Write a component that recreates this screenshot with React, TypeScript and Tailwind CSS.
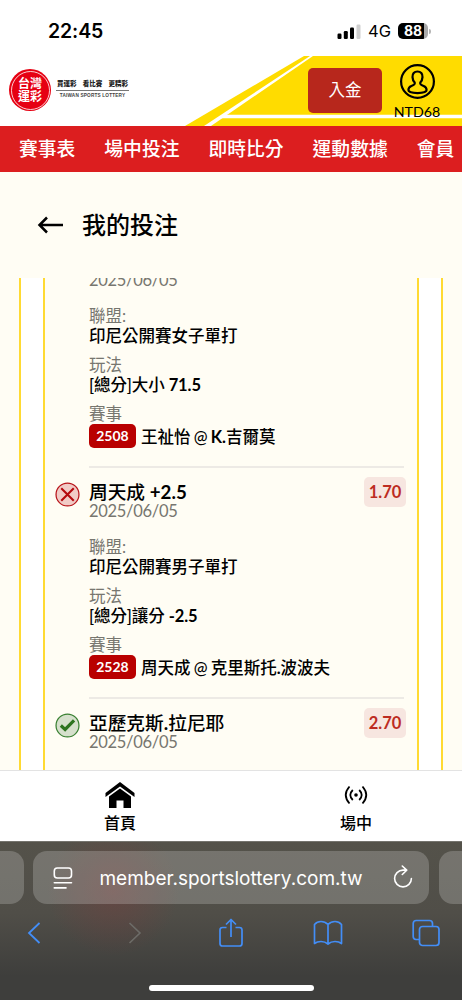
import React from 'react';

interface Bet {
  id: number;
  title: string;
  odds: string;
  status: 'win' | 'lose';
  date: string;
  league: string;
  play: string;
  code: string;
  match: string;
}

const BETS: Bet[] = [
  {
    id: 1,
    title: '',
    odds: '',
    status: 'win',
    date: '2025/06/05',
    league: '印尼公開賽女子單打',
    play: '[總分]大小 71.5',
    code: '2508',
    match: '王祉怡 @ K.吉爾莫',
  },
  {
    id: 2,
    title: '周天成 +2.5',
    odds: '1.70',
    status: 'lose',
    date: '2025/06/05',
    league: '印尼公開賽男子單打',
    play: '[總分]讓分 -2.5',
    code: '2528',
    match: '周天成 @ 克里斯托.波波夫',
  },
];

const NAV_ITEMS = ['賽事表', '場中投注', '即時比分', '運動數據', '會員'];

// Latin runs get a heavier weight so they sit evenly next to the Chinese text
function MixedText({ text }: { text: string }) {
  return (
    <span className="font-medium">
      {text.split(/([A-Z0-9+.-]+)/).map((part, i) =>
        i % 2 === 1 ? (
          <span key={i} className="font-bold">{part}</span>
        ) : (
          part
        )
      )}
    </span>
  );
}

function StatusBar() {
  return (
    <div className="flex h-14 shrink-0 items-start justify-between bg-white pl-12 pr-[31px] pt-[18px] font-['Inter','Liberation_Sans',sans-serif]">
      <span className="text-[19.5px] font-semibold leading-[26px] tracking-[-0.1px] text-black">22:45</span>
      <div className="flex h-[26px] items-center">
        <svg width="24" height="15" viewBox="0 0 24 15" className="mr-[7px]">
          <rect x="0.5" y="9.5" width="4" height="5.5" rx="1.2" />
          <rect x="6.8" y="7" width="4" height="8" rx="1.2" />
          <rect x="13" y="3.5" width="4" height="11.5" rx="1.2" />
          <rect x="19.5" y="0.5" width="4" height="14.5" rx="1.2" fill="#cfcfcf" />
        </svg>
        <span className="mr-[7px] text-[16.5px] leading-none text-black">4G</span>
        <div className="flex h-4 w-[30px] items-center justify-center rounded-[5px] bg-linear-to-r from-black from-88% to-[#aaa] to-88% text-[14px] font-bold leading-none text-white">
          88
        </div>
        <div className="ml-[1px] h-[5px] w-[2px] rounded-r bg-[#b5b5b5]" />
      </div>
    </div>
  );
}

function Logo() {
  return (
    <div className="flex items-center">
      <div className="flex size-[42px] items-center justify-center rounded-full bg-[#e60012] p-[1.5px]">
        <div className="grid size-full grid-cols-2 content-center justify-items-center gap-y-px rounded-full border border-white/80 px-[6.5px] text-[12px] font-bold leading-[12px] text-white">
          {['台', '灣', '運', '彩'].map((char) => (
            <span key={char}>{char}</span>
          ))}
        </div>
      </div>
      <div className="ml-[5px] mt-[-2px] w-[73px] text-center">
        <div className="flex justify-between border-b border-[#777] px-px pb-[2px] text-[6.5px] font-black leading-[9px] text-[#222]">
          <span>買運彩</span>
          <span>看比賽</span>
          <span>更精彩</span>
        </div>
        <div className="whitespace-nowrap pt-[1px] font-['Liberation_Sans',sans-serif] text-[4.7px] font-bold leading-[8px] tracking-[0.18px] text-[#444]">
          TAIWAN SPORTS LOTTERY
        </div>
      </div>
    </div>
  );
}

function Header() {
  return (
    <header className="relative h-[70px] shrink-0 bg-white">
      <svg width="462" height="70" viewBox="0 0 462 70" className="absolute inset-0">
        <path d="M185 70L304 0H462V70Z" fill="#ffdc00" />
        <path d="M204 70L310 0H313L211 70Z" fill="#fff" />
        <path d="M217 62.3L223 58.7H462V62.3Z" fill="#fff" />
      </svg>
      <div className="relative flex h-full items-start justify-between pl-[9px] pr-[21px]">
        <div className="pt-[13px]">
          <Logo />
        </div>
        <div className="flex">
          <button className="mt-3 h-[45px] w-[74px] rounded-[5px] bg-[#b7271c] text-[16.5px] text-white">入金</button>
          <div className="ml-[11px] flex w-[48px] flex-col items-center pt-2">
            <svg width="36" height="36" viewBox="0 0 36 36" fill="none" stroke="#000" strokeWidth="2.2">
              <circle cx="18.5" cy="17.5" r="16.4" />
              <path d="M18.5 7.5c-3.3 0-5.2 2.3-5 5.6.1 2.5 1 4.1 2.2 5.4.5 2-.6 2.5-3.3 3.5-2.3.9-3 2.2-3 4.1 0 1.8 3.8 3 9.1 3s9.1-1.2 9.1-3c0-1.9-.7-3.2-3-4.1-2.7-1-3.8-1.5-3.3-3.5 1.2-1.3 2.1-2.9 2.2-5.4.2-3.3-1.7-5.6-5-5.6Z" />
            </svg>
            <span className="mt-[3px] text-[14.2px] leading-[18px] text-black">NTD68</span>
          </div>
        </div>
      </div>
    </header>
  );
}

function NavBar() {
  return (
    <nav className="flex h-[46px] shrink-0 items-center gap-[29px] overflow-hidden whitespace-nowrap bg-[#dc1e1f] pl-[19px] text-[18.8px] font-medium text-white">
      {NAV_ITEMS.map((item) => (
        <span key={item}>{item}</span>
      ))}
    </nav>
  );
}

function StatusIcon({ status }: { status: Bet['status'] }) {
  if (status === 'win') {
    return (
      <svg width="25" height="25" viewBox="0 0 24 24" fill="none">
        <circle cx="12" cy="12" r="11" fill="#d6e0cc" stroke="#3a8032" strokeWidth="1.2" />
        <path d="M5.6 12L9.7 15.8L18.3 7" stroke="#2d731f" strokeWidth="3" />
      </svg>
    );
  }
  return (
    <svg width="25" height="25" viewBox="0 0 24 24" fill="none">
      <circle cx="12" cy="12" r="11" fill="#f1cbc6" stroke="#b8141a" strokeWidth="1.2" />
      <path d="M6 6L18 18M18 6L6 18" stroke="#b5090d" strokeWidth="2" />
    </svg>
  );
}

function BetHead({ title, odds, status, date }: Pick<Bet, 'title' | 'odds' | 'status' | 'date'>) {
  return (
    <div className="flex h-[69px] pl-[10px] pr-[11px] pt-3">
      <div className="mt-[2px] w-[34px]">
        <StatusIcon status={status} />
      </div>
      <div className="flex-1">
        <div className="h-6 text-[18.7px] leading-6 text-black">
          <MixedText text={title} />
        </div>
        <div className="-mt-px h-4 text-[16.5px] leading-4 tracking-[-0.3px] text-[#77766f]">{date}</div>
      </div>
      {odds && (
        <div className="-mt-[3px] flex h-[30px] w-[42px] items-center justify-center rounded-[5px] bg-[#f7e6e0] text-[16.5px] font-bold text-[#bd2c22]">
          {odds}
        </div>
      )}
    </div>
  );
}

function BetItem({ bet }: { bet: Bet }) {
  return (
    <div className="shrink-0">
      <BetHead title={bet.title} odds={bet.odds} status={bet.status} date={bet.date} />
      <div className="ml-11 mr-[13px] whitespace-nowrap border-b-2 border-[#edeae5] pb-[18px] text-[16.5px] leading-5 text-black">
        <div className="text-[#77766f]">聯盟:</div>
        <div className="mb-[9px]">
          <MixedText text={bet.league} />
        </div>
        <div className="text-[#77766f]">玩法</div>
        <div className="mb-[9px] tracking-[-0.1px]">
          <MixedText text={bet.play} />
        </div>
        <div className="text-[#77766f]">賽事</div>
        <div className="flex h-6 items-center gap-[5px]">
          <span className="flex h-6 w-[47px] items-center justify-center rounded-[5px] bg-[#b90000] text-[14px] font-bold text-white">
            {bet.code}
          </span>
          <span className="pt-px [word-spacing:-1px]">
            <MixedText text={bet.match} />
          </span>
        </div>
      </div>
    </div>
  );
}

function TabBar() {
  return (
    <div className="flex h-[71px] shrink-0 border-t border-[#e3e3e3] bg-white pl-[2px] text-[16px] font-medium text-black">
      <div className="flex w-[236px] shrink-0 flex-col items-center pt-[11px]">
        <svg width="30" height="27" viewBox="0 0 30 27">
          <path d="M0.5 11L15 0L29.5 11V15L15 4.5L0.5 15Z" />
          <path d="M4 14.5L15 6.5L26 14.5V26H18.5V18.5H11.5V26H4Z" />
        </svg>
        <span className="mt-[2px] leading-6">首頁</span>
      </div>
      <div className="flex w-[236px] shrink-0 flex-col items-center pt-[14px]">
        <svg width="24" height="20" viewBox="0 0 24 20" fill="none" stroke="#000" strokeWidth="1.8">
          <path d="M5.5 1.5Q-2 10 5.5 18.5M18.5 1.5Q26 10 18.5 18.5M8.8 5Q3.8 10 8.8 15M15.2 5Q20.2 10 15.2 15" />
          <circle cx="12" cy="10" r="1.8" fill="#000" stroke="none" />
        </svg>
        <span className="mt-[6px] leading-6">場中</span>
      </div>
    </div>
  );
}

function BrowserBar() {
  return (
    <div className="flex h-[159px] shrink-0 flex-col items-center border-t border-[#75746e] bg-[radial-gradient(circle_at_113px_48px,rgba(140,55,55,0.32),transparent_66px),linear-gradient(#54524a,#504e48_45%,#3e3e3c_85%)] pt-[9px] font-['Inter','Liberation_Sans',sans-serif]">
      <div className="flex h-[53px] w-full justify-between">
        <div className="w-[23.5px] rounded-r-[14px] bg-white/20" />
        <div className="flex w-[396px] items-center justify-between rounded-[14px] bg-white/20 pl-5 pr-[16px]">
          <svg width="20" height="22" viewBox="0 0 20 22" fill="none" stroke="#fff" strokeWidth="1.6" strokeLinecap="round">
            <rect x="1.3" y="1" width="17.2" height="10" rx="3" />
            <path d="M1.3 15.8H18.5M1.3 20.9H13" />
          </svg>
          <span className="-ml-[4px] pt-[2px] text-[19px] leading-none text-white">member.sportslottery.com.tw</span>
          <svg width="20" height="23" viewBox="0 0 20 23" fill="none" stroke="#fff" strokeWidth="1.6" strokeLinecap="round" strokeLinejoin="round" className="-mt-[3px]">
            <path d="M18.4 13.5A8.4 8.4 0 1 1 10 5.1H13.5M9.3 1L13.7 5.2L9.3 9.5" />
          </svg>
        </div>
        <div className="w-[23.5px] rounded-l-[14px] bg-white/20" />
      </div>
      <div className="mt-[12px] flex h-[36px] w-full items-center pb-[2px] pl-[26px]">
        <svg width="16" height="24" viewBox="0 0 16 24" fill="none" stroke="#438ef7" strokeWidth="1.8" className="mr-[85px]">
          <path d="M13.5 2L3 12L13.5 22" />
        </svg>
        <svg width="16" height="24" viewBox="0 0 16 24" fill="none" stroke="#6d6c68" strokeWidth="1.6" className="mr-[75px]">
          <path d="M2.5 2L13 12L2.5 22" />
        </svg>
        <svg width="26" height="30" viewBox="0 0 26 30" fill="none" stroke="#438ef7" strokeWidth="1.7" strokeLinejoin="round" className="mr-[69px]">
          <path d="M8.5 9.5H4.5Q2 9.5 2 12V25.5Q2 28 4.5 28H21.5Q24 28 24 25.5V12Q24 9.5 21.5 9.5H17.5M13 19V2M8 6.5L13 1.5L18 6.5" />
        </svg>
        <svg width="30" height="26" viewBox="0 0 30 26" fill="none" stroke="#438ef7" strokeWidth="1.7" strokeLinejoin="round" className="mr-[69px]">
          <path d="M15 4.5Q12 1.5 8 1.5Q4 1.5 1.5 4.5V23.5Q4 21.5 8 21.5Q12 21.5 15 24Q18 21.5 22 21.5Q26 21.5 28.5 23.5V4.5Q26 1.5 22 1.5Q18 1.5 15 4.5ZV24" />
        </svg>
        <svg width="28" height="28" viewBox="0 0 28 28" fill="none" stroke="#438ef7" strokeWidth="1.7">
          <rect x="7.5" y="7.5" width="19.5" height="19" rx="3" />
          <path d="M7.5 20.5H4Q1.2 20.5 1.2 17.5V4.5Q1.2 1.5 4.2 1.5H17.5Q20.5 1.5 20.5 4.5V7.5" />
        </svg>
      </div>
      <div className="mt-[33px] h-[6px] w-[165px] rounded-full bg-white" />
    </div>
  );
}

function App() {
  return (
    <div className="flex h-[1000px] w-[462px] flex-col overflow-hidden bg-[#fffdf4] font-['Lato','Noto_Sans_CJK_TC',sans-serif]">
      <StatusBar />
      <Header />
      <NavBar />
      <div className="flex h-[106px] shrink-0 items-center gap-[19px] pl-[37px]">
        <svg width="26" height="20" viewBox="0 0 26 20" fill="none" stroke="#000" strokeWidth="2.5">
          <path d="M26 10H3M10 2.5L2.5 10L10 17.5" />
        </svg>
        <h1 className="text-[24px] font-medium leading-8 text-black">我的投注</h1>
      </div>
      <main className="flex h-[492px] shrink-0 pl-[19px] pr-[19px]">
        <div className="flex w-full border-x-2 border-[#ffda32] bg-white px-[22px]">
          <div className="w-full overflow-hidden border-x-2 border-[#ffda32] bg-[#fffdf4]">
            <div className="-mt-[41px] flex flex-col">
              {BETS.map((bet) => (
                <BetItem key={bet.id} bet={bet} />
              ))}
              <BetHead title="亞歷克斯.拉尼耶" odds="2.70" status="win" date="2025/06/05" />
            </div>
          </div>
        </div>
      </main>
      <TabBar />
      <BrowserBar />
    </div>
  );
}

export default App;
